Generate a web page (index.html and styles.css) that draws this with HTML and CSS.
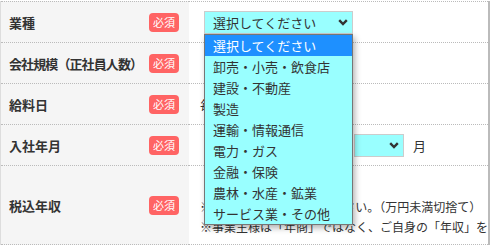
FILE: index.html
```html
<!DOCTYPE html>
<html lang="ja">
<head>
    <meta charset="UTF-8">
    <meta name="viewport" content="width=device-width, initial-scale=1.0">
    <title>Company Info</title>
    <link rel="stylesheet" href="styles.css">
</head>
<body>

    <table class="form-table">
        <tr>
            <th><div class="head"><span>業種</span><span class="badge">必須</span></div></th>
            <td>
                <div class="picker">
                    <div class="select wide">
                        <span>選択してください</span>
                        <svg class="chev" width="10" height="7" viewBox="0 0 10 7"><polyline points="1.2,1.2 5,5 8.8,1.2" /></svg>
                    </div>
                    <ul class="picker-list">
                        <li class="active">選択してください</li>
                        <li>卸売・小売・飲食店</li>
                        <li>建設・不動産</li>
                        <li>製造</li>
                        <li>運輸・情報通信</li>
                        <li>電力・ガス</li>
                        <li>金融・保険</li>
                        <li>農林・水産・鉱業</li>
                        <li>サービス業・その他</li>
                    </ul>
                </div>
            </td>
        </tr>
        <tr>
            <th><div class="head"><span class="narrow">会社規模（正社員人数）</span><span class="badge">必須</span></div></th>
            <td>
                <div class="select wide">
                    <span>選択してください</span>
                    <svg class="chev" width="10" height="7" viewBox="0 0 10 7"><polyline points="1.2,1.2 5,5 8.8,1.2" /></svg>
                </div>
            </td>
        </tr>
        <tr>
            <th><div class="head"><span>給料日</span><span class="badge">必須</span></div></th>
            <td>
                <div class="inline">
                    <span>毎月</span>
                    <div class="select small">
                        <span></span>
                        <svg class="chev" width="10" height="7" viewBox="0 0 10 7"><polyline points="1.2,1.2 5,5 8.8,1.2" /></svg>
                    </div>
                    <span>日</span>
                </div>
            </td>
        </tr>
        <tr>
            <th><div class="head"><span>入社年月</span><span class="badge">必須</span></div></th>
            <td>
                <div class="inline">
                    <div class="select year">
                        <span></span>
                        <svg class="chev" width="10" height="7" viewBox="0 0 10 7"><polyline points="1.2,1.2 5,5 8.8,1.2" /></svg>
                    </div>
                    <span class="unit">年</span>
                    <div class="select small">
                        <span></span>
                        <svg class="chev" width="10" height="7" viewBox="0 0 10 7"><polyline points="1.2,1.2 5,5 8.8,1.2" /></svg>
                    </div>
                    <span class="unit">月</span>
                </div>
            </td>
        </tr>
        <tr class="tall">
            <th><div class="head"><span>税込年収</span><span class="badge">必須</span></div></th>
            <td>
                <div class="inline">
                    <div class="text-box"></div>
                    <span class="unit">万円</span>
                </div>
                <div class="note">
                    <div>※税込年収を入力してください。（万円未満切捨て）</div>
                    <div>※事業主様は「年商」ではなく、ご自身の「年収」を入力してください。</div>
                </div>
            </td>
        </tr>
    </table>

</body>
</html>
```

FILE: styles.css
```css
body {
    margin: 0;
    padding-top: 1px;
    font-family: "Noto Sans CJK JP", sans-serif;
    color: #333;
    background: #fff;
}
.form-table {
    width: 490px;
    table-layout: fixed;
    border-collapse: separate;
    border-spacing: 0;
    border-left: 1px solid #ddd;
    border-right: 2px solid #bbb;
}
th, td {
    height: 40px;
    padding: 0;
    border-top: 1px dotted #bbb;
    vertical-align: middle;
    text-align: left;
}
th {
    width: 170px;
    padding: 0 10px 0 8px;
    background: #f5f5f5;
    font-size: 13px;
    font-weight: bold;
}
td {
    padding-left: 11px;
    font-size: 13px;
}
.tall th, .tall td {
    height: 78px;
    border-bottom: 1px dotted #bbb;
}
.head {
    display: flex;
    justify-content: space-between;
    align-items: center;
}
.narrow {
    letter-spacing: -0.9px;
}
.badge {
    flex-shrink: 0;
    height: 19px;
    line-height: 19px;
    padding: 0 4px;
    border-radius: 4px;
    background: #ff6464;
    color: #fff;
    font-size: 11px;
    font-weight: normal;
}
.picker {
    position: relative;
    width: 149px;
    margin-left: 4px;
}
.select {
    box-sizing: border-box;
    display: flex;
    justify-content: space-between;
    align-items: center;
    height: 23px;
    padding: 0 4px 0 8px;
    border: 1px solid #ccc;
    background: #9ff;
    font-size: 13px;
}
.wide {
    width: 149px;
}
td > .wide {
    margin-left: 4px;
}
.small {
    width: 50px;
}
.year {
    width: 122px;
    margin-left: 4px;
}
.chev {
    fill: none;
    stroke: #333;
    stroke-width: 2.4;
}
.picker-list {
    position: absolute;
    top: 100%;
    left: 0;
    z-index: 10;
    box-sizing: border-box;
    width: 149px;
    margin: 0;
    padding: 0;
    list-style: none;
    border: 1px solid #767676;
    background: #9ff;
    box-shadow: 2px 3px 6px rgba(0, 0, 0, 0.3);
}
.picker-list li {
    height: 21px;
    line-height: 21px;
    padding-left: 8px;
    white-space: nowrap;
}
.picker-list .active {
    background: #1e90ff;
    color: #fff;
}
.inline {
    display: flex;
    align-items: center;
    gap: 6px;
}
.unit {
    margin-left: 3px;
}
.text-box {
    box-sizing: border-box;
    width: 100px;
    height: 24px;
    margin-left: 4px;
    border: 1px solid #ccc;
}
.note {
    width: 288px;
    overflow: hidden;
    white-space: nowrap;
    font-size: 12px;
    line-height: 20px;
}
```
